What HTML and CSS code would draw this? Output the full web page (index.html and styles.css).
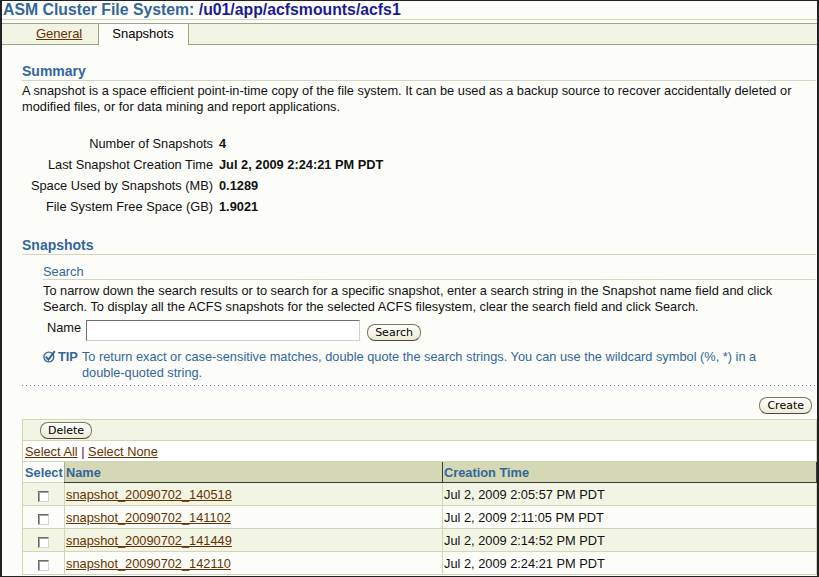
FILE: index.html
```
<!DOCTYPE html>
<html>
    <head>
        <title>ASM Cluster File System</title>

        <link rel="stylesheet" href="styles.css">
    </head>

    <body>
        <div id="page_wrapper">
            <div class="page_title">ASM Cluster File System: <span class="title_path">/u01/app/acfsmounts/acfs1</span></div>

            <div class="tab_bar">
                <a class="tab" href="#">General</a>
                <span class="tab tab_active">Snapshots</span>
            </div>

            <div class="content">
                <div class="section_header">Summary</div>
                <p class="section_text">A snapshot is a space efficient point-in-time copy of the file system. It can be used as a backup source to recover accidentally deleted or modified files, or for data mining and report applications.</p>

                <table class="summary_table">
                    <tr>
                        <td class="prompt">Number of Snapshots</td>
                        <td class="value">4</td>
                    </tr>
                    <tr>
                        <td class="prompt">Last Snapshot Creation Time</td>
                        <td class="value">Jul 2, 2009 2:24:21 PM PDT</td>
                    </tr>
                    <tr>
                        <td class="prompt">Space Used by Snapshots (MB)</td>
                        <td class="value">0.1289</td>
                    </tr>
                    <tr>
                        <td class="prompt">File System Free Space (GB)</td>
                        <td class="value">1.9021</td>
                    </tr>
                </table>

                <div class="section_header snapshots_header">Snapshots</div>

                <div class="search_wrapper">
                    <div class="sub_header">Search</div>
                    <p class="section_text search_text">To narrow down the search results or to search for a specific snapshot, enter a search string in the Snapshot name field and click Search. To display all the ACFS snapshots for the selected ACFS filesystem, clear the search field and click Search.</p>

                    <div class="search_row">
                        <label class="search_label" for="txtName">Name</label>
                        <input type="text" id="txtName" class="search_field">
                        <button class="button search_button">Search</button>
                    </div>

                    <div class="tip">
                        <svg class="tip_icon" width="13" height="13" viewBox="0 0 13 13">
                            <circle cx="5.8" cy="7" r="4.9" fill="none" stroke="#336699" stroke-width="1.4"/>
                            <path d="M2.8 6.6 L5.4 9.6 L11.8 1.2" fill="none" stroke="#336699" stroke-width="2"/>
                        </svg>
                        <span class="tip_label">TIP</span>
                        <span class="tip_text">To return exact or case-sensitive matches, double quote the search strings. You can use the wildcard symbol (%, *) in a <span class="nowrap">double-quoted</span> string.</span>
                    </div>
                </div>

                <div class="dotted_line"></div>

                <div class="create_row">
                    <button class="button">Create</button>
                </div>

                <table class="results_table">
                    <tr class="toolbar_row">
                        <td colspan="3"><button class="button delete_button">Delete</button></td>
                    </tr>
                    <tr class="select_row">
                        <td colspan="3"><a href="#">Select All</a> <span class="separator">|</span> <a href="#">Select None</a></td>
                    </tr>
                    <tr class="header_row">
                        <th class="col_select">Select</th>
                        <th class="col_name">Name</th>
                        <th class="col_time">Creation Time</th>
                    </tr>
                    <tr class="row_odd">
                        <td class="cell_select"><input type="checkbox" class="row_check"></td>
                        <td><a href="#">snapshot_20090702_140518</a></td>
                        <td>Jul 2, 2009 2:05:57 PM PDT</td>
                    </tr>
                    <tr class="row_even">
                        <td class="cell_select"><input type="checkbox" class="row_check"></td>
                        <td><a href="#">snapshot_20090702_141102</a></td>
                        <td>Jul 2, 2009 2:11:05 PM PDT</td>
                    </tr>
                    <tr class="row_odd">
                        <td class="cell_select"><input type="checkbox" class="row_check"></td>
                        <td><a href="#">snapshot_20090702_141449</a></td>
                        <td>Jul 2, 2009 2:14:52 PM PDT</td>
                    </tr>
                    <tr class="row_even">
                        <td class="cell_select"><input type="checkbox" class="row_check"></td>
                        <td><a href="#">snapshot_20090702_142110</a></td>
                        <td>Jul 2, 2009 2:24:21 PM PDT</td>
                    </tr>
                </table>
            </div>
        </div>
    </body>
</html>
```

FILE: styles.css
```
body
{
    margin:0;
    font-family:"Liberation Sans", Arial, sans-serif;
    font-size:12.8px;
    color:#111111;
}

#page_wrapper
{
    width:819px;
    height:577px;
    box-sizing:border-box;
    border-top:1px solid #222222;
    border-left:2px solid #222222;
    border-right:2px solid #222222;
    border-bottom:1px solid #222222;
    background-color:#fcfdf9;
    overflow:hidden;
}

.page_title
{
    padding-left:1px;
    font-size:15.8px;
    font-weight:bold;
    line-height:18px;
    color:#336699;
    border-bottom:1px solid #d3d6bf;
    white-space:nowrap;
}

.title_path
{
    color:#1c1c8f;
}

.tab_bar
{
    display:flex;
    margin-top:3px;
    height:20px;
    padding-left:18px;
    background-color:#f3f5e4;
    border-top:1px solid #9da584;
    border-bottom:1px solid #9da584;
    font-size:13px;
    line-height:20px;
}

.tab
{
    padding:0 16px;
    color:#663300;
}

.tab_active
{
    height:21px;
    margin-bottom:-1px;
    padding:0 14px 0 13px;
    color:#000000;
    background-color:#fcfdf9;
    border-left:1px solid #9da584;
    border-right:1px solid #9da584;
}

.content
{
    padding:0 1px 0 20px;
}

.section_header
{
    margin-top:18px;
    font-size:14px;
    font-weight:bold;
    line-height:17px;
    color:#336699;
    border-bottom:1px solid #d3d6bf;
}

.snapshots_header
{
    margin-top:20px;
}

.section_text
{
    margin:2px 0 0 0;
    line-height:16px;
}

.summary_table
{
    margin-top:18px;
    border-collapse:collapse;
}

.summary_table td
{
    height:21px;
    padding:0;
}

.prompt
{
    width:191px;
    text-align:right;
}

.value
{
    padding-left:6px !important;
    font-weight:bold;
}

.search_wrapper
{
    padding-left:21px;
}

.sub_header
{
    margin-top:10px;
    line-height:14px;
    color:#336699;
    border-bottom:1px solid #d3d6bf;
}

.search_text
{
    margin-top:3px;
}

.search_row
{
    display:flex;
    align-items:flex-start;
    margin-top:5px;
}

.search_label
{
    margin-left:4px;
    margin-right:5px;
    line-height:15px;
}

.search_field
{
    width:274px;
    height:21px;
    box-sizing:border-box;
    margin:0;
    border-top:1px solid #6e6e6e;
    border-left:1px solid #6e6e6e;
    border-right:1px solid #cfcfcf;
    border-bottom:1px solid #cfcfcf;
    background-color:#ffffff;
}

.button
{
    height:17px;
    padding:0 7px;
    font-family:"DejaVu Sans", Tahoma, sans-serif;
    font-size:11px;
    line-height:15px;
    color:#000000;
    background:linear-gradient(#ffffff, #ecebd6);
    border:1px solid #7a7a5a;
    border-bottom-color:#4a4a32;
    border-radius:8px;
}

.search_button
{
    margin-left:7px;
    margin-top:4px;
}

.tip
{
    display:flex;
    margin-top:8px;
    line-height:16px;
    color:#336699;
}

.tip_icon
{
    flex:none;
    margin-top:1px;
}

.tip_label
{
    margin-left:2px;
    font-weight:bold;
}

.tip_text
{
    margin-left:4px;
}

.nowrap
{
    white-space:nowrap;
}

.dotted_line
{
    height:1px;
    margin-top:4px;
    background-image:linear-gradient(to right, #5a84b4 1px, transparent 1px);
    background-size:4px 1px;
}

.create_row
{
    display:flex;
    justify-content:flex-end;
    margin-top:11px;
    padding-right:4px;
}

.results_table
{
    width:795px;
    margin-top:5px;
    border-collapse:collapse;
}

.results_table td
{
    height:22px;
    padding:0 0 0 1px;
    border:1px solid #d2d6b6;
}

.results_table a
{
    color:#663300;
}

.toolbar_row td
{
    height:20px !important;
    padding-left:17px !important;
    background-color:#f2f4e4;
}

.select_row td
{
    height:20px !important;
    padding-left:2px !important;
    background-color:#ffffff;
}

.separator
{
    color:#660066;
}

.header_row th
{
    height:20px;
    padding:0 0 0 1px;
    text-align:left;
    color:#336699;
    font-weight:bold;
}

.col_select
{
    width:39px;
    padding-left:2px !important;
    border-left:1px solid #d2d6b6;
    background-color:#fcfdf9;
}

.col_name
{
    width:376px;
    background-color:#d4d8b4;
    border-top:1px solid #a9ab98;
    border-left:1px solid #a9ab98;
    border-bottom:1px solid #3a3a3a;
}

.col_time
{
    background-color:#d4d8b4;
    border-top:1px solid #a9ab98;
    border-left:1px solid #3a3a3a;
    border-right:1px solid #3a3a3a;
    border-bottom:1px solid #3a3a3a;
}

.row_odd td
{
    background-color:#f2f4e4;
}

.row_even td
{
    background-color:#fcfdf9;
}

.cell_select
{
    text-align:center;
    padding:0 !important;
}

.row_check
{
    appearance:none;
    -webkit-appearance:none;
    width:11px;
    height:11px;
    margin:4px 0 0 0;
    vertical-align:top;
    box-sizing:border-box;
    background-color:#ffffff;
    border-top:1px solid #6a6a6a;
    border-left:1px solid #6a6a6a;
    border-right:1px solid #d4d4d4;
    border-bottom:1px solid #d4d4d4;
    box-shadow:inset 1px 1px 0 #a0a0a0;
}
```
